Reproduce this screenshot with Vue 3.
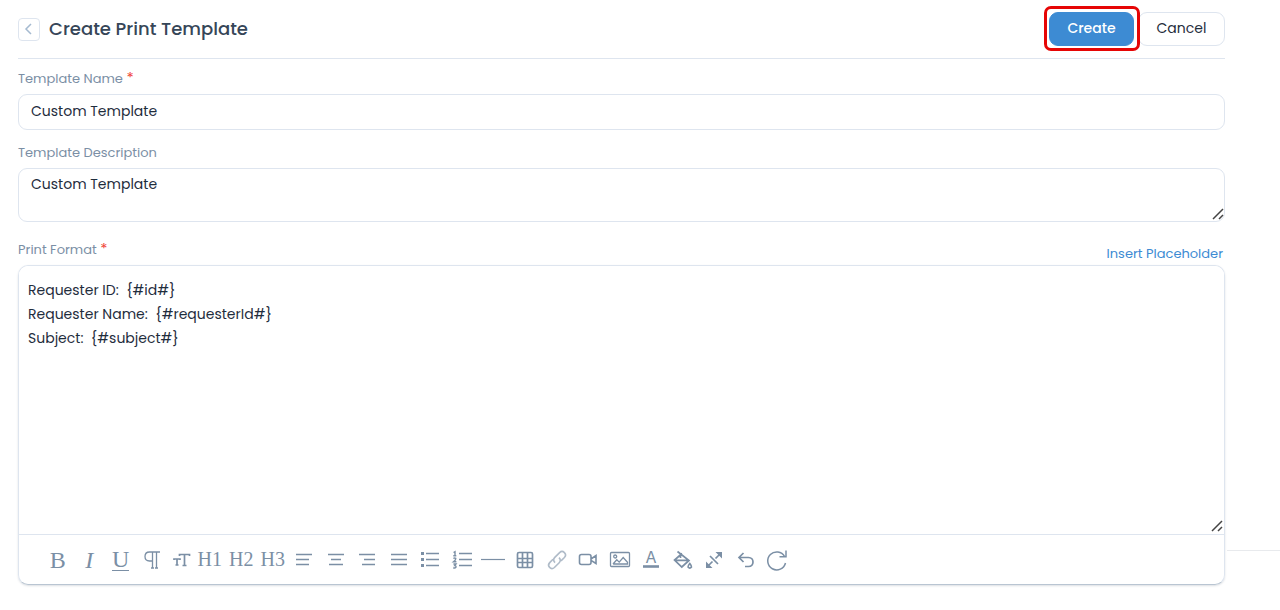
<script setup>
import { ref } from 'vue'

const name = ref('Custom Template')
const description = ref('Custom Template')
const format = ref('Requester ID:  {#id#}\nRequester Name:  {#requesterId#}\nSubject:  {#subject#}')

const letters = [
  { label: 'Bold', text: 'B', cls: 'big' },
  { label: 'Italic', text: 'I', cls: 'big italic' },
  { label: 'Underline', text: 'U', cls: 'big under' },
]
const headings = ['H1', 'H2', 'H3']
const icons = [
  { label: 'Align left', d: 'M4 6.5H20M4 11.5H14M4 11.5H17M4 16.5H17', w: 1.7 },
  { label: 'Align center', d: 'M4 6.5H20M7 11.5H17M5 16.5H19', w: 1.7 },
  { label: 'Align right', d: 'M4 6.5H20M9 11.5H20M7 16.5H20', w: 1.7 },
  { label: 'Justify', d: 'M4 6.5H20M4 11.5H20M4 16.5H20', w: 1.7 },
  { label: 'Bullet list', d: 'M8 5.5H21M8 11.5H21M8 17.5H21', f: 'M3 4h3v3h-3zM3 10h3v3h-3zM3 16h3v3h-3z', w: 1.5 },
  { label: 'Numbered list', d: 'M9 5.5H22M9 11.5H22M9 17.5H22M3.5 4.5L5 3.7V7.5M3.3 7.7H6.3M3.4 10.6Q4.6 9.4 5.8 10.4Q6 11.8 3.5 13.8H6.4M3.4 16H6L4.7 17.6Q6.4 17.8 5.9 19.3Q4.8 20.6 3.3 19.6', w: 1.4 },
  { label: 'Horizontal rule', d: 'M0 11.5H24', w: 1.2 },
  { label: 'Table', d: 'M6 4.5H18Q19.5 4.5 19.5 6V18Q19.5 19.5 18 19.5H6Q4.5 19.5 4.5 18V6Q4.5 4.5 6 4.5ZM4.5 10.5H19.5M4.5 14.5H19.5M9.5 4.5V19.5M14.5 4.5V19.5', w: 1.7 },
  { label: 'Link', d: 'M10 14.6C8.2 12.7 8.4 10.8 9.8 9.4L14.6 4.6C17.8 1.6 22.6 6 19.4 9.5L16 12.9M14 9.6C15.8 11.4 15.6 13.3 14.2 14.7L9.4 19.5C6 22.4 1.6 18 4.7 14.6L8 11.3', w: 1.6, faded: true },
  { label: 'Video', d: 'M5.5 6.5H13Q15 6.5 15 8.5V14.5Q15 16.5 13 16.5H5.5Q3.5 16.5 3.5 14.5V8.5Q3.5 6.5 5.5 6.5ZM15 11L20 7.5V15.5L15 12.3', w: 1.6 },
  { label: 'Image', d: 'M3.5 4.5H20.5Q21.5 4.5 21.5 5.5V17.5Q21.5 18.5 20.5 18.5H3.5Q2.5 18.5 2.5 17.5V5.5Q2.5 4.5 3.5 4.5ZM5 16L8.8 11.8L11.2 14.1L15.2 9.5L19.5 14.3V16H5M5.7 8.5a1.5 1.5 0 1 0 3 0a1.5 1.5 0 1 0-3 0', w: 1.3 },
  { label: 'Text colour', text: 'A', d: 'M4 18.5H20', w: 2.6 },
  { label: 'Background colour', d: 'M6.5 3.5L18 12.5L10.8 19L3.5 12L11 5.5M4 12.4H17.5M9.5 6.5V10M18.8 15.5Q16.8 18 17 19Q18.8 21.2 20.5 19Q20.7 17.8 18.8 15.5Z', w: 1.7 },
  { label: 'Full screen', d: 'M5 19L10.5 13.5M13.5 10.5L19 5M8 8L16 16', f: 'M13.5 4H20V10.5ZM4 13.5V20H10.5Z', w: 1.7 },
  { label: 'Undo', d: 'M9.5 5L5 9.5L9.5 14M5 9.5H14.5C20.5 9.5 20.5 18.5 14.5 18.5H11', w: 1.7 },
  { label: 'Redo', d: 'M19.6 8.5A9 9 0 1 0 20.5 15M21 2.5V8.7H14.5', w: 1.5 },
]
</script>

<template>
  <main class="page">
    <form class="form" @submit.prevent>
      <header class="header">
        <button type="button" class="back" aria-label="Back">
          <svg viewBox="0 0 12 12" width="12" height="12"><path d="M8 1L3 6L8 11" stroke-width="1.5" /></svg>
        </button>
        <h1>Create Print Template</h1>
        <div class="actions">
          <button type="submit" class="btn primary">Create</button>
          <button type="button" class="btn">Cancel</button>
        </div>
      </header>

      <div class="field">
        <label for="name">Template Name <span class="req">*</span></label>
        <input id="name" v-model="name" type="text" />
      </div>

      <div class="field">
        <label for="description">Template Description</label>
        <div class="area">
          <textarea id="description" v-model="description"></textarea>
          <svg class="grip" viewBox="0 0 12 12" width="12" height="12"><path d="M1 11L11 1M7 11L11 7" /></svg>
        </div>
      </div>

      <div class="format-head">
        <label for="format">Print Format <span class="req">*</span></label>
        <a href="#">Insert Placeholder</a>
      </div>
      <section class="editor">
        <div class="area">
          <textarea id="format" v-model="format" spellcheck="false"></textarea>
          <svg class="grip" viewBox="0 0 12 12" width="12" height="12"><path d="M1 11L11 1M7 11L11 7" /></svg>
        </div>
        <div class="toolbar" role="toolbar" aria-label="Formatting">
          <div class="group marks">
            <button v-for="l in letters" :key="l.label" type="button" :aria-label="l.label" :class="l.cls"><span>{{ l.text }}</span></button>
            <button type="button" aria-label="Paragraph">
              <svg viewBox="0 0 24 24"><path d="M20 4H9.5C3.5 4 3.5 13 9.5 13H12.5M12.5 4V20M16.5 4V20M11 20H14M15 20H18" stroke-width="1.3" /></svg>
            </button>
          </div>
          <button type="button" class="size" aria-label="Text size">
            <svg viewBox="0 0 24 24"><path d="M10.5 8V6.5H20.5V8M15.5 6.5V17.5M13.5 17.5H17.5M5 12V11H11V12M8 11V17M6.5 17H9.5" stroke-width="1.7" /></svg>
          </button>
          <div class="group blocks">
            <button v-for="h in headings" :key="h" type="button" class="heading">{{ h }}</button>
            <button v-for="i in icons" :key="i.label" type="button" :aria-label="i.label" :class="{ faded: i.faded }">
              <svg viewBox="0 0 24 24">
                <path :d="i.d" :stroke-width="i.w" />
                <path v-if="i.f" class="solid" :d="i.f" />
                <text v-if="i.text" x="12" y="15" text-anchor="middle">{{ i.text }}</text>
              </svg>
            </button>
          </div>
        </div>
      </section>
    </form>
    <div class="edge"></div>
  </main>
</template>

<style>
body {
  margin: 0;
  background: #fff;
}
</style>

<style scoped>
* {
  box-sizing: border-box;
}
.page {
  position: relative;
  padding: 0 55px 24px 18px;
  font-family: Poppins, Inter, sans-serif;
  font-size: 14px;
  color: #1f2d3d;
}
button,
input,
textarea {
  font: inherit;
  color: inherit;
  margin: 0;
}
button {
  padding: 0;
  border: 0;
  background: none;
  cursor: pointer;
}
svg {
  display: block;
  fill: none;
  stroke: currentColor;
}
.header {
  display: flex;
  align-items: center;
  height: 59px;
  border-bottom: 1px solid #dee5ef;
}
.back {
  display: grid;
  place-items: center;
  width: 22px;
  height: 23px;
  border: 1px solid #dee5ef;
  border-radius: 4px;
  color: #a5bad0;
}
h1 {
  margin: 0 0 0 9px;
  font-size: 18px;
  line-height: 24px;
  font-weight: 500;
  color: #364658;
}
.actions {
  display: flex;
  gap: 4px;
  margin-left: auto;
}
.btn {
  width: 87px;
  height: 34px;
  padding-bottom: 2px;
  border: 1px solid #dee5ef;
  border-radius: 9px;
}
.primary {
  position: relative;
  z-index: 1;
  width: 85px;
  border-color: #3d8bd3;
  background: #3d8bd3;
  color: #fff;
  font-weight: 500;
}
.primary::after {
  content: "";
  position: absolute;
  inset: -7px -7px -6px -6px;
  border: 3px solid #e60505;
  border-radius: 7px;
}
.field {
  display: flex;
  flex-direction: column;
}
label,
a {
  font-size: 13px;
  line-height: 20px;
}
label {
  color: #7b8fa5;
}
.field label {
  margin: 10px 0 5px;
}
.field + .field label {
  margin-top: 13px;
}
.req {
  font-size: 15px;
  line-height: 16px;
  color: #f04438;
}
input,
textarea {
  display: block;
  width: 100%;
  border: 1px solid #dee5ef;
  border-radius: 9px;
  background: #fff;
  outline: none;
}
input {
  height: 36px;
  padding: 0 12px 1px;
}
textarea {
  height: 54px;
  padding: 3px 12px;
  line-height: 24px;
  resize: none;
  overflow: hidden;
}
.area {
  position: relative;
}
.grip {
  position: absolute;
  right: 1px;
  bottom: 2px;
  color: #444;
  stroke-width: 1.5;
}
.format-head {
  display: flex;
  justify-content: space-between;
  padding: 18px 2px 5px 0;
}
a {
  margin: 4px 0 -4px;
  color: #3d8bd3;
  text-decoration: none;
}
.editor {
  border: 1px solid #dee5ef;
  border-bottom-color: #b9c5d2;
  border-radius: 10px;
  box-shadow: 0 1px 2px rgba(60, 80, 100, 0.18);
}
.editor textarea {
  height: 268px;
  padding: 12px 9px;
  border: 0;
}
.toolbar {
  display: flex;
  height: 50px;
  padding-left: 23px;
  border-top: 1px solid #dee5ef;
  color: #7b8fa5;
}
.group {
  display: grid;
  grid-auto-flow: column;
  grid-auto-columns: minmax(0, 1fr);
}
.marks {
  width: 126px;
}
.size {
  width: 26px;
}
.blocks {
  width: 599px;
}
.toolbar button {
  display: grid;
  place-items: center;
}
.toolbar svg {
  width: 24px;
  height: 24px;
}
.toolbar text {
  font: 16px Inter, sans-serif;
  fill: currentColor;
  stroke: none;
}
.solid {
  fill: currentColor;
  stroke: none;
}
.faded {
  opacity: 0.6;
}
.big,
.heading {
  font-family: "Liberation Serif", serif;
}
.toolbar .big {
  font-size: 24px;
  line-height: 24px;
}
.toolbar .italic {
  font-style: italic;
}
.under span {
  height: 22px;
  line-height: 20px;
  border-bottom: 1px solid currentColor;
}
.toolbar .heading {
  font-size: 20px;
}
.edge {
  position: absolute;
  right: 0;
  top: 550px;
  width: 53px;
  height: 1px;
  background: #e8eaed;
}
</style>
